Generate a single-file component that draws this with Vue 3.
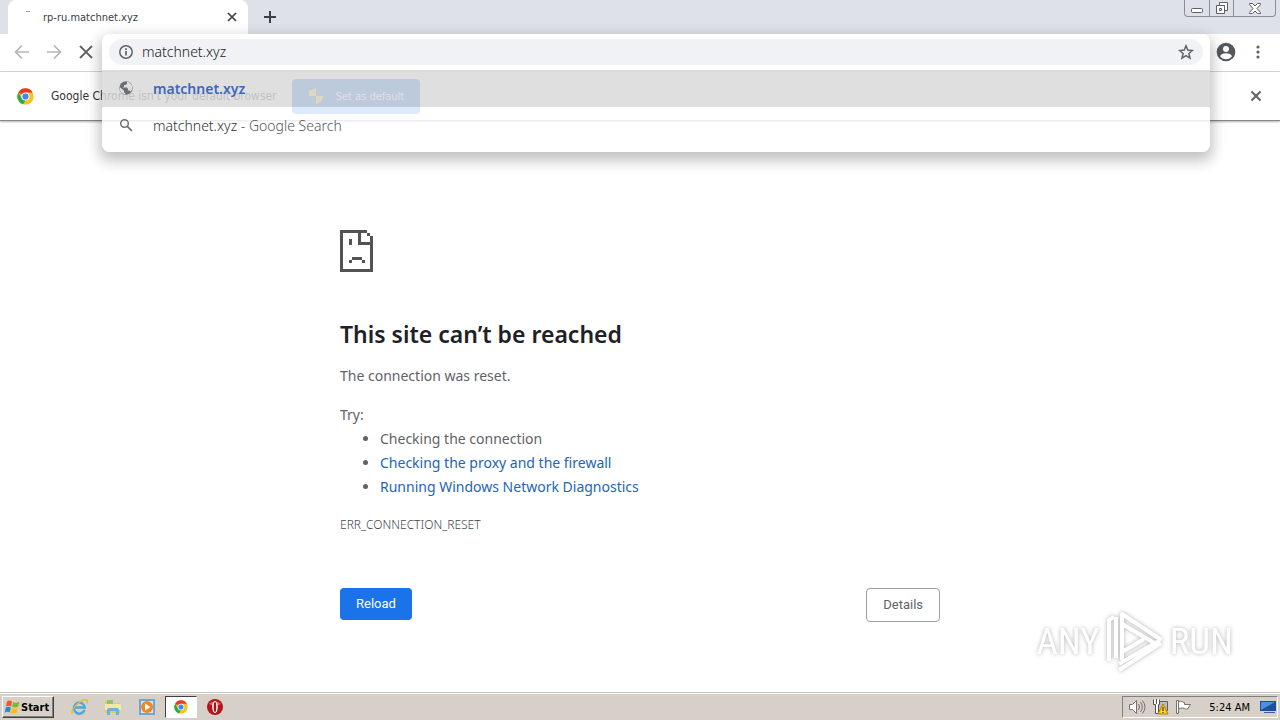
<script setup>
import { ref } from 'vue'

const address = ref('matchnet.xyz')

const tips = [
  { text: 'Checking the connection', link: false },
  { text: 'Checking the proxy and the firewall', link: true },
  { text: 'Running Windows Network Diagnostics', link: true },
]
</script>

<template>
  <div class="desktop">
    <header class="tab-strip">
      <div class="tab">
        <span class="spinner"></span>
        <span class="tab-title">rp-ru.matchnet.xyz</span>
        <button class="icon-btn tab-close" aria-label="Close tab">
          <svg width="10" height="10" viewBox="0 0 10 10"><path d="M1 1l8 8M9 1L1 9" stroke="#3c4043" stroke-width="1.700" /></svg>
        </button>
      </div>
      <button class="icon-btn new-tab" aria-label="New tab">
        <svg width="12" height="12" viewBox="0 0 12 12"><path d="M6 0v12M0 6h12" stroke="#3c4043" stroke-width="2" /></svg>
      </button>
      <div class="window-controls">
        <button aria-label="Minimize">
          <svg width="14" height="14" viewBox="0 0 14 14"><rect x="1.500" y="7.500" width="11" height="4" rx="1" fill="#fff" stroke="#5b5f6b" /></svg>
        </button>
        <button aria-label="Restore">
          <svg width="14" height="14" viewBox="0 0 14 14" fill="#fff" stroke="#5b5f6b">
            <path d="M4.500 1.500h8v8h-8z" />
            <path d="M1.500 4.500h8v8h-8z" />
            <path d="M4.500 7.500h2v2h-2z" />
          </svg>
        </button>
        <button class="wide" aria-label="Close">
          <svg width="14" height="14" viewBox="0 0 14 14"><path d="M1.500 2.500h3L7 5l2.500-2.500h3v1L9 7.500l3.500 4v1h-3L7 10l-2.500 2.500h-3v-1L5 7.500l-3.500-4z" fill="#fff" stroke="#5b5f6b" /></svg>
        </button>
      </div>
    </header>

    <nav class="toolbar">
      <div class="nav-buttons">
        <button class="icon-btn" aria-label="Back">
          <svg width="16" height="16" viewBox="0 0 16 16" fill="none" stroke="#b4b6b9" stroke-width="1.700"><path d="M15 8H2M8 1.500L1.500 8 8 14.500" /></svg>
        </button>
        <button class="icon-btn" aria-label="Forward">
          <svg width="16" height="16" viewBox="0 0 16 16" fill="none" stroke="#b4b6b9" stroke-width="1.700"><path d="M1 8h13M8 1.500L14.500 8 8 14.500" /></svg>
        </button>
        <button class="icon-btn" aria-label="Stop">
          <svg width="16" height="16" viewBox="0 0 16 16"><path d="M2 2l12 12M14 2L2 14" stroke="#5f6368" stroke-width="1.800" /></svg>
        </button>
      </div>

      <div class="omnibox">
        <div class="dropdown">
          <div class="address-row">
            <div class="address">
              <svg width="16" height="16" viewBox="0 0 16 16" fill="none" stroke="#5f6368">
                <circle cx="8" cy="8" r="6.200" stroke-width="1.500" />
                <path d="M8 7v4.500M8 4.300v1.700" stroke-width="1.700" />
              </svg>
              <input v-model="address" type="text" aria-label="Address and search bar" />
              <button class="icon-btn" aria-label="Bookmark this page">
                <svg width="16" height="16" viewBox="0 0 16 16"><path d="M8 1.800l1.800 4.300 4.600.400-3.500 3 1.100 4.600L8 11.700l-4 2.400 1.100-4.600-3.500-3 4.600-.400z" fill="none" stroke="#5f6368" stroke-width="1.500" /></svg>
              </button>
            </div>
          </div>
          <ul class="suggestions">
            <li class="suggestion selected">
              <svg width="16" height="16" viewBox="0 0 16 16">
                <circle cx="8" cy="7" r="6.700" fill="#6b6e71" />
                <path d="M9 .8v2L7.500 4H6v1.500L4.800 6.500H9L10 8v1.500h1.700l.8 1.200c1.800-2 2.200-4 1.500-6C13.200 2.500 11.500 1 9 .8zM1.800 6L6 9.800v1.400l1.200 1V13.200C4 13 1 10.500 1.800 6z" fill="#dedede" />
              </svg>
              <span class="match">matchnet.xyz</span>
            </li>
            <li class="suggestion">
              <svg width="16" height="16" viewBox="0 0 16 16" fill="none" stroke="#6f7276">
                <circle cx="6.500" cy="5.500" r="3.800" stroke-width="1.500" />
                <path d="M9.300 8.300l4.500 4.500" stroke-width="1.800" />
              </svg>
              <span>matchnet.xyz <span class="engine">- Google Search</span></span>
            </li>
          </ul>
        </div>
      </div>

      <div class="toolbar-end">
        <button class="icon-btn" aria-label="Profile">
          <svg width="20" height="20" viewBox="0 0 20 20">
            <circle cx="10" cy="10" r="9.300" fill="#55585d" />
            <circle cx="10" cy="7" r="3" fill="#fff" />
            <path d="M4 14.200c1-2.400 4-3 6-3s5 .6 6 3c-1.500 2-3.600 3-6 3s-4.500-1-6-3z" fill="#fff" />
          </svg>
        </button>
        <button class="icon-btn" aria-label="Customize and control">
          <svg width="4" height="14" viewBox="0 0 4 14" fill="#5f6368"><circle cx="2" cy="2" r="1.600" /><circle cx="2" cy="7" r="1.600" /><circle cx="2" cy="12" r="1.600" /></svg>
        </button>
      </div>
    </nav>

    <aside class="infobar">
      <svg width="17" height="17" viewBox="0 0 48 48">
        <circle cx="24" cy="24" r="23" fill="#fbc116" />
        <path d="M24 24L4 12.500A23 23 0 0 1 44 12.500H24z" fill="#e33b2e" />
        <path d="M4 12.500L14 30l10 5-7 11A23 23 0 0 1 4 12.500z" fill="#2da94f" />
        <circle cx="24" cy="24" r="11.500" fill="#fff" />
        <circle cx="24" cy="24" r="8.800" fill="#4285f4" />
      </svg>
      <span class="infobar-text">Google Chrome isn't your default browser</span>
      <button class="default-btn">
        <svg width="16" height="16" viewBox="0 0 14 16">
          <path d="M7 0c2 1.500 4 2 7 2v6H7z" fill="#2f6fd0" />
          <path d="M0 8h7v8C3 14 .3 12 0 8z" fill="#2f6fd0" />
          <path d="M0 2c3 0 5-.5 7-2v8H0z" fill="#f5d040" />
          <path d="M7 8h7c-.3 4-3 6.500-7 8z" fill="#f5d040" />
        </svg>
        Set as default
      </button>
      <button class="icon-btn infobar-close" aria-label="Dismiss">
        <svg width="12" height="12" viewBox="0 0 12 12"><path d="M1.500 1.500l9 9M10.500 1.500l-9 9" stroke="#5f6368" stroke-width="2" /></svg>
      </button>
    </aside>

    <main class="page">
      <section class="error">
        <svg class="sad-page" width="33" height="42" viewBox="0 0 33 42" fill="#535353" shape-rendering="crispEdges">
          <path d="M0 0h27v3H3v36h27V15H18V3h3v9h9V6h3v36H0z" />
          <path d="M27 3h3v3h-3zM9 9h3v6H9zM12 27h10v3H12zM9 30h3v3H9zM22 30h3v3h-3z" />
        </svg>
        <h1>This site can’t be reached</h1>
        <p class="reason">The connection was reset.</p>
        <p class="try">Try:</p>
        <ul class="tips">
          <li v-for="tip in tips" :key="tip.text">
            <a v-if="tip.link" href="#">{{ tip.text }}</a>
            <template v-else>{{ tip.text }}</template>
          </li>
        </ul>
        <p class="code">ERR_CONNECTION_RESET</p>
        <div class="actions">
          <button class="reload">Reload</button>
          <button class="details">Details</button>
        </div>
      </section>

      <div class="watermark">
        <span>ANY</span>
        <svg width="60" height="64" viewBox="0 0 60 64" fill="none" stroke="#fff" stroke-width="4" stroke-linejoin="round">
          <path d="M4 51V10l5-3M11 48V7" />
          <path d="M17 42V4l38 25-4 5L17 14" />
          <path d="M17 42l22-13M14 54l38-22M14 60l42-27M17 42v8" />
        </svg>
        <span>RUN</span>
      </div>
    </main>

    <footer class="taskbar">
      <button class="start">
        <svg width="16" height="16" viewBox="0 0 16 16">
          <path d="M3 2.500C5 1 6.500 1.500 8 2.500L7 7.500C5.500 6.500 4 6.300 2 7.500z" fill="#ea5a24" />
          <path d="M9 3c2 1 4 1 6.500-.5l-1.200 5C12 9 10 8.700 8 7.700z" fill="#7fba28" />
          <path d="M1.800 8.500c2-1.200 3.500-1 5 0l-1 5c-1.500-1-3-1-5 .2z" fill="#2e86d6" />
          <path d="M7.700 9c2 1 4 1 6.200-.3l-1.200 5c-2.200 1.300-4 1.200-6 .3z" fill="#f9bd16" />
        </svg>
        Start
      </button>
      <div class="quick-launch">
        <button aria-label="Internet Explorer">
          <svg width="18" height="18" viewBox="0 0 18 18" fill="none">
            <path d="M14.500 12A5.500 5.500 0 1 1 14.800 9.500H4" stroke="#49a9e2" stroke-width="2.500" />
            <path d="M2.500 16C-1 13 11 0 17 2c1 .6.500 2-.5 3.500" stroke="#e8b92c" stroke-width="1.300" />
          </svg>
        </button>
        <button aria-label="Windows Explorer">
          <svg width="18" height="18" viewBox="0 0 18 18">
            <path d="M1 3h6l1 2h8v10H1z" fill="#e9c65c" />
            <path d="M3 2h6v4H3z" fill="#8cc56c" />
            <path d="M1 6h16v6H1z" fill="#f8e8a0" />
            <path d="M3 17v-5q0-2 2-2h8q2 0 2 2v5h-3v-4H6v4z" fill="#69b4df" />
          </svg>
        </button>
        <button aria-label="Windows Media Player">
          <svg width="18" height="18" viewBox="0 0 18 18">
            <path d="M1 1h16v16H1z" fill="#6ea6d8" />
            <path d="M3 3h12v12H3z" fill="#d5e7f6" />
            <circle cx="9" cy="9" r="6" fill="#f08a1c" />
            <path d="M7 5.500v7L12.500 9z" fill="#fff" />
          </svg>
        </button>
        <button class="active" aria-label="Google Chrome">
          <svg width="14" height="14" viewBox="0 0 48 48">
            <circle cx="24" cy="24" r="23" fill="#fbc116" />
            <path d="M24 24L4 12.500A23 23 0 0 1 44 12.500H24z" fill="#e33b2e" />
            <path d="M4 12.500L14 30l10 5-7 11A23 23 0 0 1 4 12.500z" fill="#2da94f" />
            <circle cx="24" cy="24" r="11.500" fill="#fff" />
            <circle cx="24" cy="24" r="8.800" fill="#4285f4" />
          </svg>
        </button>
        <button aria-label="Opera">
          <svg width="18" height="18" viewBox="0 0 18 18">
            <circle cx="9" cy="9" r="8" fill="#b4151b" />
            <path d="M3 6a7 5 0 0 1 12 0q-6 3-12 0z" fill="#d8666a" />
            <ellipse cx="9" cy="9" rx="2.800" ry="6" fill="#fff" />
            <ellipse cx="9" cy="9" rx="1.300" ry="5" fill="#a31318" />
          </svg>
        </button>
      </div>
      <div class="tray">
        <svg width="18" height="16" viewBox="0 0 18 16" fill="none" stroke="#77736c">
          <path d="M1.500 5.500h3L8.500 1.500v13l-4-4h-3z" fill="#fff" />
          <path d="M10.500 5q2 3 0 6M12.500 3q3.500 5 0 10M14.500 1.500q5 6.500 0 13" />
        </svg>
        <svg width="17" height="16" viewBox="0 0 17 16">
          <path d="M5.500 2.500h10v9h-10z" fill="#bcbcb8" stroke="#62605a" />
          <path d="M1.500.5v5h2v9h3v-9h1v-5M4.500 0v5" fill="#fff" stroke="#55534e" />
          <path d="M11 5l5 10H6z" fill="#ffd21f" stroke="#a98400" />
          <path d="M11 8v4M11 13v1" stroke="#222" />
        </svg>
        <svg width="18" height="16" viewBox="0 0 18 16" fill="#fff" stroke="#77736c">
          <path d="M3.500 2.500c3-1 4 1 6 1v2h6l-3 4.500c-3 .5-3-2-9-.5z" />
          <path d="M1.500 1.500h2v13h-2z" />
        </svg>
        <time>5:24 AM</time>
        <button class="show-desktop" aria-label="Show desktop">
          <svg width="16" height="14" viewBox="0 0 16 14">
            <path d="M0 1h16v10H0z" fill="#1d4f9e" />
            <path d="M1 2h14L1 10z" fill="#4d8fdc" />
            <path d="M4 12h11v1H4z" fill="#3c5f95" />
          </svg>
        </button>
      </div>
    </footer>
  </div>
</template>

<style>
body {
  margin: 0;
}
</style>

<style scoped>
.desktop {
  --ui: 'DejaVu Sans Condensed', 'DejaVu Sans', sans-serif;
  display: flex;
  flex-direction: column;
  min-height: 100vh;
  background: #fff;
  font-family: 'Noto Sans', sans-serif;
}

button {
  font: inherit;
  margin: 0;
  padding: 0;
  border: 0;
  background: none;
}

svg {
  display: block;
  flex: none;
}

.icon-btn {
  display: flex;
  align-items: center;
  justify-content: center;
}

.tab-strip {
  display: flex;
  height: 34px;
  background: #dee1e8;
}

.tab {
  display: flex;
  align-items: center;
  box-sizing: border-box;
  width: 240px;
  margin-left: 8px;
  padding: 0 11px 0 18px;
  background: #fff;
  border-radius: 8px 8px 0 0;
}

.spinner {
  width: 4px;
  height: 1px;
  margin: 0 13px 12px 0;
  background: #9aa0a6;
}

.tab-title {
  flex: 1;
  font-family: var(--ui);
  font-size: 11px;
  color: #3c4043;
}

.new-tab {
  margin-left: 16px;
}

.window-controls {
  display: flex;
  height: 16px;
  margin-left: auto;
  margin-right: 4px;
  border: 1px solid #8b8e98;
  border-top: 0;
  border-radius: 0 0 4px 4px;
}

.window-controls button {
  display: flex;
  align-items: center;
  justify-content: center;
  width: 24px;
}

.window-controls button + button {
  border-left: 1px solid #8b8e98;
}

.window-controls .wide {
  width: 42px;
}

.toolbar {
  display: flex;
  height: 37px;
  background: #fff;
  border-bottom: 1px solid #d5d7da;
}

.nav-buttons {
  display: flex;
  gap: 16px;
  width: 88px;
  padding-left: 14px;
}

.nav-buttons .icon-btn,
.toolbar-end .icon-btn {
  height: 36px;
}

.omnibox {
  position: relative;
  z-index: 2;
  flex: 1;
}

.dropdown {
  position: absolute;
  top: 0;
  left: 0;
  right: 0;
  overflow: hidden;
  border-radius: 8px;
  box-shadow: 0 6px 14px 3px rgba(0, 0, 0, 0.24);
}

.address-row {
  padding: 5px 7px;
  background: #fff;
}

.address {
  display: flex;
  align-items: center;
  gap: 8px;
  height: 26px;
  padding: 0 9px;
  background: #f0f2f5;
  border-radius: 13px;
}

.address input {
  flex: 1;
  min-width: 0;
  height: 24px;
  padding: 0 0 2px;
  border: 0;
  outline: 0;
  background: none;
  font-family: 'Noto Sans', sans-serif;
  font-size: 14px;
  font-weight: 300;
  color: #202124;
}

.suggestions {
  margin: 0;
  padding: 0;
  list-style: none;
}

.suggestion {
  display: flex;
  align-items: center;
  gap: 19px;
  height: 37px;
  padding: 0 16px 8px;
  background: rgba(255, 255, 255, 0.85);
  font-size: 14px;
  font-weight: 300;
  color: #303338;
}

.suggestion.selected {
  padding-bottom: 0;
  background: rgba(217, 217, 217, 0.85);
}

.match {
  font-weight: 600;
  color: #3c68bd;
}

.engine {
  color: #55585c;
}

.toolbar-end {
  display: flex;
  gap: 20px;
  width: 64px;
  padding-left: 6px;
}

.infobar {
  display: flex;
  align-items: center;
  height: 48px;
  padding: 0 18px 0 17px;
  background: #fff;
  border-bottom: 1px solid #85878a;
  box-shadow: 0 1px 2px rgba(0, 0, 0, 0.3);
  font-family: var(--ui);
  font-size: 12px;
  color: #303338;
}

.infobar-text {
  margin: 0 15px 0 17px;
}

.default-btn {
  display: flex;
  align-items: center;
  gap: 12px;
  height: 35px;
  padding: 0 16px;
  background: #1a73e8;
  border-radius: 4px;
  font-size: 11px;
  color: #fff;
}

.infobar-close {
  margin-left: auto;
}

.page {
  position: relative;
  flex: 1;
}

.error {
  max-width: 600px;
  margin: 0 auto;
  padding-top: 109px;
  font-size: 14px;
  line-height: 24px;
  color: #5f6368;
}

h1 {
  margin: 44px 0 12px;
  font-size: 23px;
  font-weight: 600;
  line-height: 36px;
  color: #202124;
}

.error p {
  margin: 0;
}

.error .reason {
  margin-bottom: 15px;
}

.tips {
  margin: 0;
  padding-left: 40px;
}

.tips a {
  color: #2465b5;
  text-decoration: none;
}

.error .code {
  margin-top: 14px;
  font-size: 12px;
  font-weight: 300;
  color: #45484c;
}

.actions {
  display: flex;
  align-items: flex-start;
  justify-content: space-between;
  margin-top: 51px;
  font-family: Roboto, sans-serif;
  font-size: 13px;
}

.reload {
  height: 32px;
  padding: 0 16px;
  background: #1a73e8;
  border-radius: 4px;
  color: #fff;
}

.details {
  height: 34px;
  padding: 0 16px;
  border: 1px solid #9aa0a6;
  border-radius: 4px;
  background: #fff;
  color: #5f6368;
}

.watermark {
  position: absolute;
  right: 47px;
  bottom: 19px;
  display: flex;
  align-items: center;
  gap: 5px;
  font-family: 'Roboto Condensed', 'Liberation Sans Narrow', 'Liberation Sans', sans-serif;
  font-size: 37px;
  line-height: 64px;
  color: #fff;
  filter: drop-shadow(0 0 2px rgba(0, 0, 0, 0.3));
}

.taskbar {
  display: flex;
  align-items: center;
  height: 26px;
  border-top: 1px solid #fff;
  box-shadow: 0 -1px 0 #c9c5bd;
  background: #d6d0c8;
  font-family: var(--ui);
  font-size: 11px;
}

.start {
  display: flex;
  align-items: center;
  gap: 1px;
  box-sizing: border-box;
  height: 22px;
  margin-left: 2px;
  padding: 0 4px 0 1px;
  border: 1px solid;
  border-color: #fff #404040 #404040 #fff;
  box-shadow: inset -1px -1px 0 #808080;
  font-weight: 700;
  color: #000;
}

.quick-launch {
  display: flex;
  gap: 2px;
  margin-left: 9px;
}

.quick-launch button {
  display: flex;
  align-items: center;
  justify-content: center;
  box-sizing: border-box;
  width: 32px;
  height: 22px;
}

.quick-launch .active {
  border: 1px solid;
  border-color: #404040 #fff #fff #404040;
  background: #fff;
}

.tray {
  display: flex;
  align-items: center;
  gap: 6px;
  box-sizing: border-box;
  height: 22px;
  margin-left: auto;
  margin-right: 2px;
  padding: 0 1px 0 5px;
  border: 1px solid;
  border-color: #808080 #fff #fff #808080;
}

.tray time {
  margin: 0 4px 0 10px;
  color: #000;
}
</style>
